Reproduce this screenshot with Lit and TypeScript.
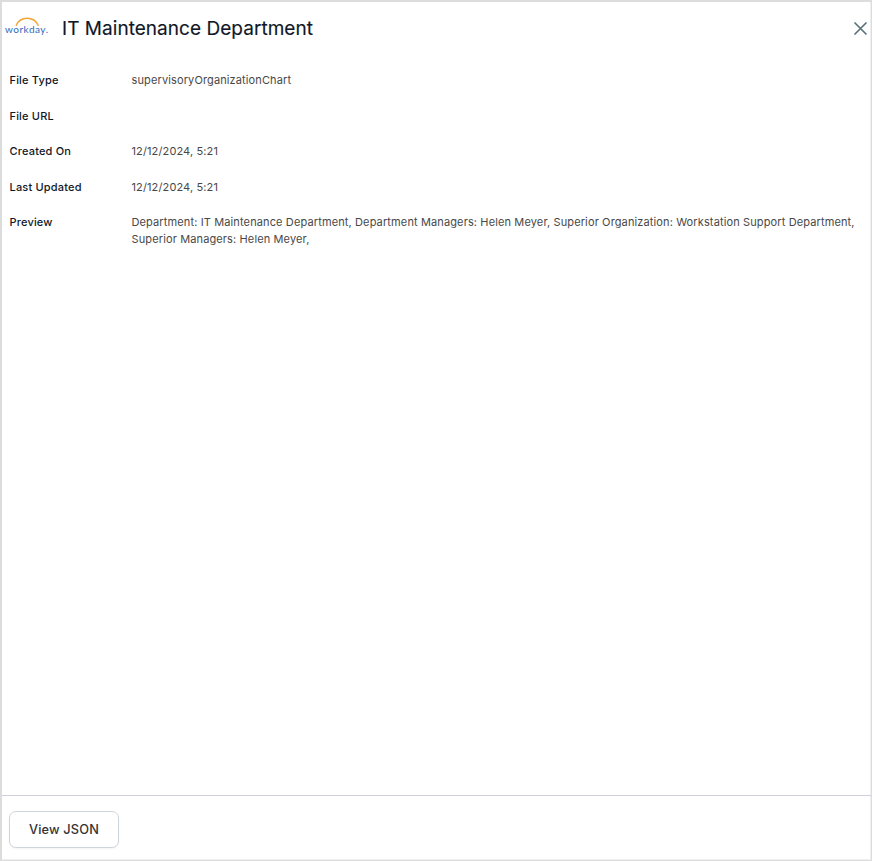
import { LitElement, html, css } from "lit";
import { customElement } from "lit/decorators.js";

const rows = [
  ["File Type", "supervisoryOrganizationChart"],
  ["File URL", ""],
  ["Created On", "12/12/2024, 5:21"],
  ["Last Updated", "12/12/2024, 5:21"],
  ["Preview", "Department: IT Maintenance Department, Department Managers: Helen Meyer, Superior Organization: Workstation Support Department, Superior Managers: Helen Meyer,"],
];

@customElement("app-root")
export class AppRoot extends LitElement {
  static styles = css`
    :host { display: block; height: 861px; font-family: Inter, sans-serif; }
    .panel { box-sizing: border-box; height: 861px; border: 2px solid #dcdcdc; border-right-width: 1px; border-bottom-width: 1px; box-shadow: inset -1px -1px #f0f0f0; display: flex; flex-direction: column; background: #fff; }
    header { display: flex; align-items: center; height: 52px; padding: 0 3px 0 2px; }
    .logo { width: 46px; height: 24px; flex: none; }
    .arc { fill: none; stroke: #f3a536; stroke-width: 1.5; stroke-linecap: round; }
    .word { font: 400 10px Lato, sans-serif; fill: #3069b8; }
    h1 { margin: 0 auto 0 12px; padding-top: 2px; font-size: 19px; font-weight: 400; line-height: 28px; letter-spacing: 0.04px; color: #101828; -webkit-text-stroke: 0.15px #101828; }
    .close { width: 15px; height: 15px; }
    .close path { stroke: #58707c; stroke-width: 1.65; }
    dl { margin: 0; padding: 18px 8px 0 7.5px; flex: 1; display: grid; grid-template-columns: 122px 1fr; align-content: start; row-gap: 18.5px; font-size: 11px; letter-spacing: 0.125px; line-height: 17px; }
    dt { font-weight: 500; letter-spacing: 0.18px; color: #101828; }
    dd { margin: 0; color: #484848; }
    footer { border-top: 1px solid #d0d0dc; height: 65px; padding: 15px 7px 0; box-sizing: border-box; }
    button { box-sizing: border-box; display: block; width: 110px; height: 37px; border: 1px solid #d0d5dd; border-radius: 7px; background: #fff; font: 500 12.75px Inter, sans-serif; letter-spacing: 0.18px; color: #333; padding: 0 0 1px; box-shadow: 0 1px 2px rgba(16, 24, 40, 0.05); }
  `;
  render() {
    return html`<div class="panel">
      <header>
        <svg class="logo" viewBox="0 0 46 24"><path class="arc" d="M12.3 9.2a12 12 0 0 1 21.8 0"/><text class="word" x="1" y="17" textLength="43">workday.</text></svg>
        <h1>IT Maintenance Department</h1>
        <svg class="close" viewBox="0 0 15 15"><path d="M1.5 1.5l12 12M13.5 1.5l-12 12"/></svg>
      </header>
      <dl>${rows.map(([k, v]) => html`<dt>${k}</dt><dd>${v}</dd>`)}</dl>
      <footer><button>View JSON</button></footer>
    </div>`;
  }
}
